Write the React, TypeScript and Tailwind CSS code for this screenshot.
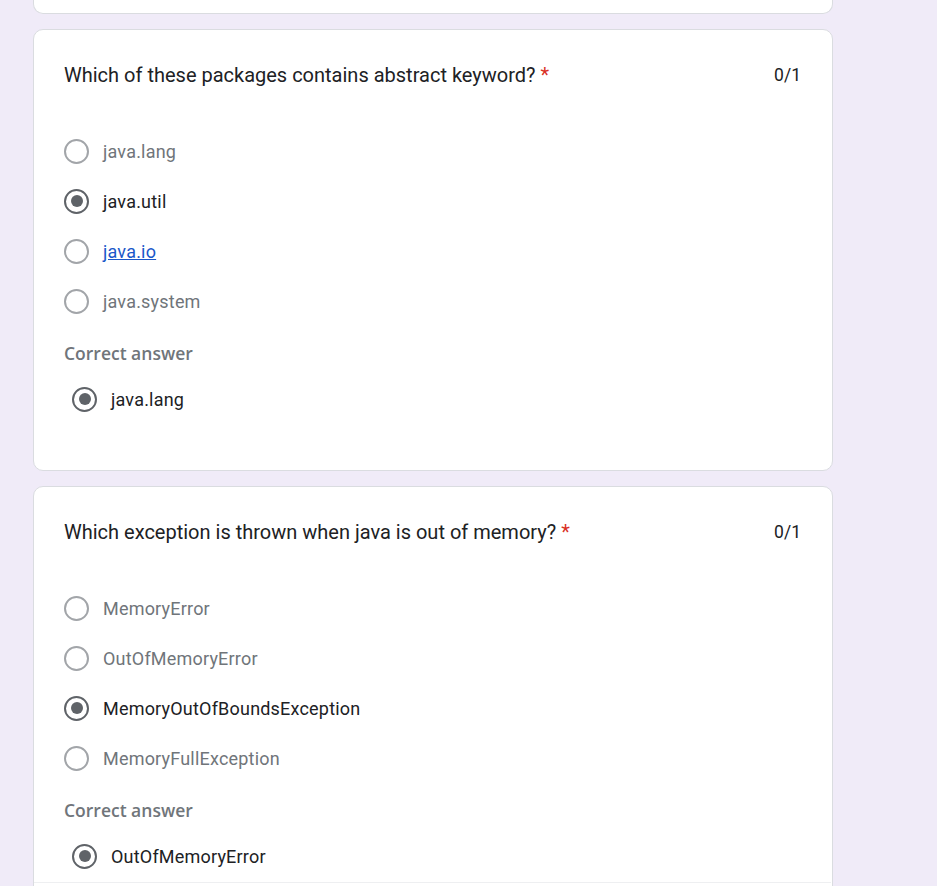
import React from "react";

type Opt = { label: string; selected?: boolean; link?: boolean };

function Radio({ selected }: { selected?: boolean }) {
  return (
    <span
      className={
        "flex h-[25px] w-[25px] shrink-0 items-center justify-center rounded-full border-[2.5px] " +
        (selected ? "border-[#5f6368]" : "border-[#a2a5a9]")
      }
    >
      {selected && <span className="h-[12px] w-[12px] rounded-full bg-[#5f6368]" />}
    </span>
  );
}

function Question({
  title,
  options,
  correct,
  last,
}: {
  title: string;
  options: Opt[];
  correct: string;
  last?: boolean;
}) {
  return (
    <div
      className={
        "rounded-[10px] border border-[#dadce0] bg-white pl-[30px] pr-[31px] pt-[30px] " +
        (last ? "pb-[60px]" : "pb-[46px]")
      }
    >
      <div className="flex items-start justify-between">
        <div className="text-[20px] leading-[30px] text-[#202124]">
          {title} <span className="text-[#d93025]">*</span>
        </div>
        <div className="text-[17.5px] leading-[30px] text-[#202124]">0/1</div>
      </div>
      <div className="mt-[36px] flex flex-col">
        {options.map((o) => (
          <div key={o.label} className="flex h-[50px] items-center gap-[14px]">
            <Radio selected={o.selected} />
            <span
              className={
                "text-[18px] tracking-[0.2px] " +
                (o.link
                  ? "text-[#1a57c9] underline"
                  : o.selected
                  ? "text-[#202124]"
                  : "text-[#70757a]")
              }
            >
              {o.label}
            </span>
          </div>
        ))}
      </div>
      <div
        className="mt-[16px] text-[17.5px] font-semibold leading-[22px] text-[#70757a]"
        style={{ fontFamily: '"Open Sans", Roboto, sans-serif' }}
      >
        Correct answer
      </div>
      <div className="mt-[10px] flex h-[50px] items-center gap-[14px] pl-[8px]">
        <Radio selected />
        <span className="text-[18px] tracking-[0.2px] text-[#202124]">{correct}</span>
      </div>
      {last && <div className="-mx-[30px] mt-[1px] h-px bg-[#eeeff1]" />}
    </div>
  );
}

export default function App() {
  return (
    <div
      className="h-[886px] w-full overflow-hidden bg-[#f0ebf8]"
      style={{ fontFamily: "Roboto, 'Liberation Sans', sans-serif" }}
    >
      <div className="ml-[33px] flex w-[800px] flex-col gap-[15px]">
        <div className="h-[14px] rounded-b-[10px] border-x border-b border-[#dadce0] bg-white" />
        <Question
          title="Which of these packages contains abstract keyword?"
          options={[
            { label: "java.lang" },
            { label: "java.util", selected: true },
            { label: "java.io", link: true },
            { label: "java.system" },
          ]}
          correct="java.lang"
        />
        <Question
          title="Which exception is thrown when java is out of memory?"
          options={[
            { label: "MemoryError" },
            { label: "OutOfMemoryError" },
            { label: "MemoryOutOfBoundsException", selected: true },
            { label: "MemoryFullException" },
          ]}
          correct="OutOfMemoryError"
          last
        />
      </div>
    </div>
  );
}
